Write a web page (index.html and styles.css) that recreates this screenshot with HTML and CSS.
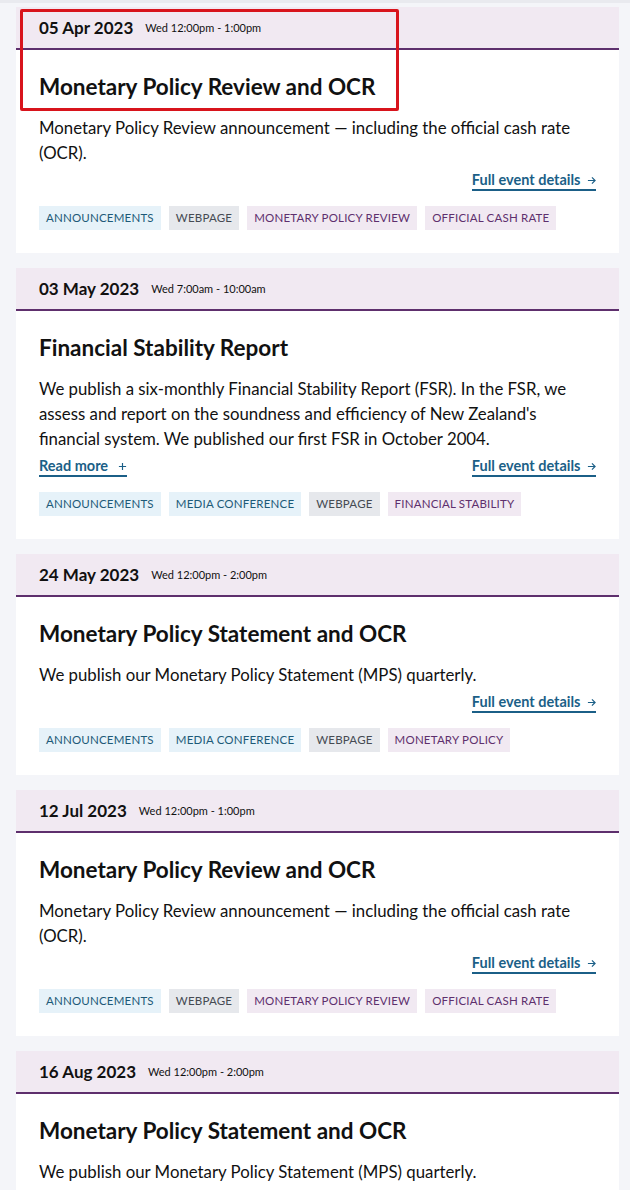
FILE: index.html
```html
<!DOCTYPE html>
<html lang="en">
<head>
    <meta charset="UTF-8">
    <meta name="viewport" content="width=device-width, initial-scale=1.0">
    <title>Upcoming events</title>
    <link rel="stylesheet" href="styles.css">
</head>
<body>
    <div class="events">
        <div class="event">
            <div class="event_head">
                <span class="event_date">05 Apr 2023</span>
                <span class="event_time">Wed 12:00pm - 1:00pm</span>
            </div>
            <div class="event_body">
                <h2 class="event_title">Monetary Policy Review and OCR</h2>
                <p class="event_desc">Monetary Policy Review announcement — including the official cash rate (OCR).</p>
                <div class="event_links">
                    <a class="link link_right" href="#">Full event details <svg class="arrow" viewBox="0 0 10 10"><path d="M1 5h8M5.5 1.5L9 5L5.5 8.5"/></svg></a>
                </div>
                <div class="tags">
                    <span class="tag tag_blue">Announcements</span>
                    <span class="tag tag_grey">Webpage</span>
                    <span class="tag tag_purple">Monetary policy review</span>
                    <span class="tag tag_purple">Official cash rate</span>
                </div>
            </div>
        </div>

        <div class="event">
            <div class="event_head">
                <span class="event_date">03 May 2023</span>
                <span class="event_time">Wed 7:00am - 10:00am</span>
            </div>
            <div class="event_body">
                <h2 class="event_title">Financial Stability Report</h2>
                <p class="event_desc">We publish a six-monthly Financial Stability Report (FSR). In the FSR, we assess and report on the soundness and efficiency of New Zealand's financial system. We published our first FSR in October 2004.</p>
                <div class="event_links">
                    <a class="link" href="#">Read more <svg class="plus" viewBox="0 0 10 10"><path d="M5 1v8M1 5h8"/></svg></a>
                    <a class="link link_right" href="#">Full event details <svg class="arrow" viewBox="0 0 10 10"><path d="M1 5h8M5.5 1.5L9 5L5.5 8.5"/></svg></a>
                </div>
                <div class="tags">
                    <span class="tag tag_blue">Announcements</span>
                    <span class="tag tag_blue">Media conference</span>
                    <span class="tag tag_grey">Webpage</span>
                    <span class="tag tag_purple">Financial stability</span>
                </div>
            </div>
        </div>

        <div class="event">
            <div class="event_head">
                <span class="event_date">24 May 2023</span>
                <span class="event_time">Wed 12:00pm - 2:00pm</span>
            </div>
            <div class="event_body">
                <h2 class="event_title">Monetary Policy Statement and OCR</h2>
                <p class="event_desc">We publish our Monetary Policy Statement (MPS) quarterly.</p>
                <div class="event_links">
                    <a class="link link_right" href="#">Full event details <svg class="arrow" viewBox="0 0 10 10"><path d="M1 5h8M5.5 1.5L9 5L5.5 8.5"/></svg></a>
                </div>
                <div class="tags">
                    <span class="tag tag_blue">Announcements</span>
                    <span class="tag tag_blue">Media conference</span>
                    <span class="tag tag_grey">Webpage</span>
                    <span class="tag tag_purple">Monetary policy</span>
                </div>
            </div>
        </div>

        <div class="event">
            <div class="event_head">
                <span class="event_date">12 Jul 2023</span>
                <span class="event_time">Wed 12:00pm - 1:00pm</span>
            </div>
            <div class="event_body">
                <h2 class="event_title">Monetary Policy Review and OCR</h2>
                <p class="event_desc">Monetary Policy Review announcement — including the official cash rate (OCR).</p>
                <div class="event_links">
                    <a class="link link_right" href="#">Full event details <svg class="arrow" viewBox="0 0 10 10"><path d="M1 5h8M5.5 1.5L9 5L5.5 8.5"/></svg></a>
                </div>
                <div class="tags">
                    <span class="tag tag_blue">Announcements</span>
                    <span class="tag tag_grey">Webpage</span>
                    <span class="tag tag_purple">Monetary policy review</span>
                    <span class="tag tag_purple">Official cash rate</span>
                </div>
            </div>
        </div>

        <div class="event">
            <div class="event_head">
                <span class="event_date">16 Aug 2023</span>
                <span class="event_time">Wed 12:00pm - 2:00pm</span>
            </div>
            <div class="event_body">
                <h2 class="event_title">Monetary Policy Statement and OCR</h2>
                <p class="event_desc">We publish our Monetary Policy Statement (MPS) quarterly.</p>
            </div>
        </div>
    </div>

    <!-- highlight box drawn over the first event -->
    <div class="highlight"></div>
</body>
</html>
```

FILE: styles.css
```css
body {
    margin: 0;
    background-color: #f4f5f9;
    border-top: 3px solid #e9eaef;
    color: #111;
    font-family: Lato, "Open Sans", Arial, sans-serif;
    overflow: hidden;
}

.events {
    padding: 4px 11px 0 16px;
}

.event {
    background-color: #fff;
    margin-bottom: 15px;
}

.event_head {
    display: flex;
    align-items: center;
    gap: 12px;
    height: 41px;
    padding: 0 23px;
    background-color: #f1e9f2;
    border-bottom: 2px solid #5e2f6d;
}

.event_date {
    font-size: 17px;
    font-weight: 700;
}

.event_time {
    font-size: 11px;
}

.event_body {
    padding: 24px 23px 23px;
}

.event_title {
    font-size: 22.5px;
    line-height: 26px;
    font-weight: 700;
    margin: 0 0 15px;
}

.event_desc {
    font-size: 16.8px;
    line-height: 25px;
    margin: 0;
}

.event_links {
    display: flex;
    margin-top: 6px;
    height: 20px;
}

.link {
    font-size: 14.5px;
    line-height: 18px;
    font-weight: 700;
    color: #1b5f87;
    text-decoration: none;
    border-bottom: 2px solid #1b5f87;
}

.link_right {
    margin-left: auto;
}

.arrow,
.plus {
    width: 9px;
    height: 9px;
    margin-left: 3px;
    fill: none;
    stroke: currentColor;
    stroke-width: 1.3;
}

.plus {
    margin-left: 6px;
}

.tags {
    display: flex;
    flex-wrap: wrap;
    gap: 8px;
    margin-top: 15px;
}

.tag {
    font-size: 11.5px;
    line-height: 24px;
    padding: 0 7px;
    text-transform: uppercase;
    letter-spacing: 0.2px;
}

.tag_blue {
    background-color: #e6f2f9;
    color: #1d5a78;
}

.tag_grey {
    background-color: #e6e8ec;
    color: #454a52;
}

.tag_purple {
    background-color: #f1e9f2;
    color: #5e2f6d;
}

.highlight {
    position: absolute;
    left: 20px;
    top: 9px;
    width: 373px;
    height: 96px;
    border: 3px solid #d8141c;
    border-radius: 2px;
}
```
